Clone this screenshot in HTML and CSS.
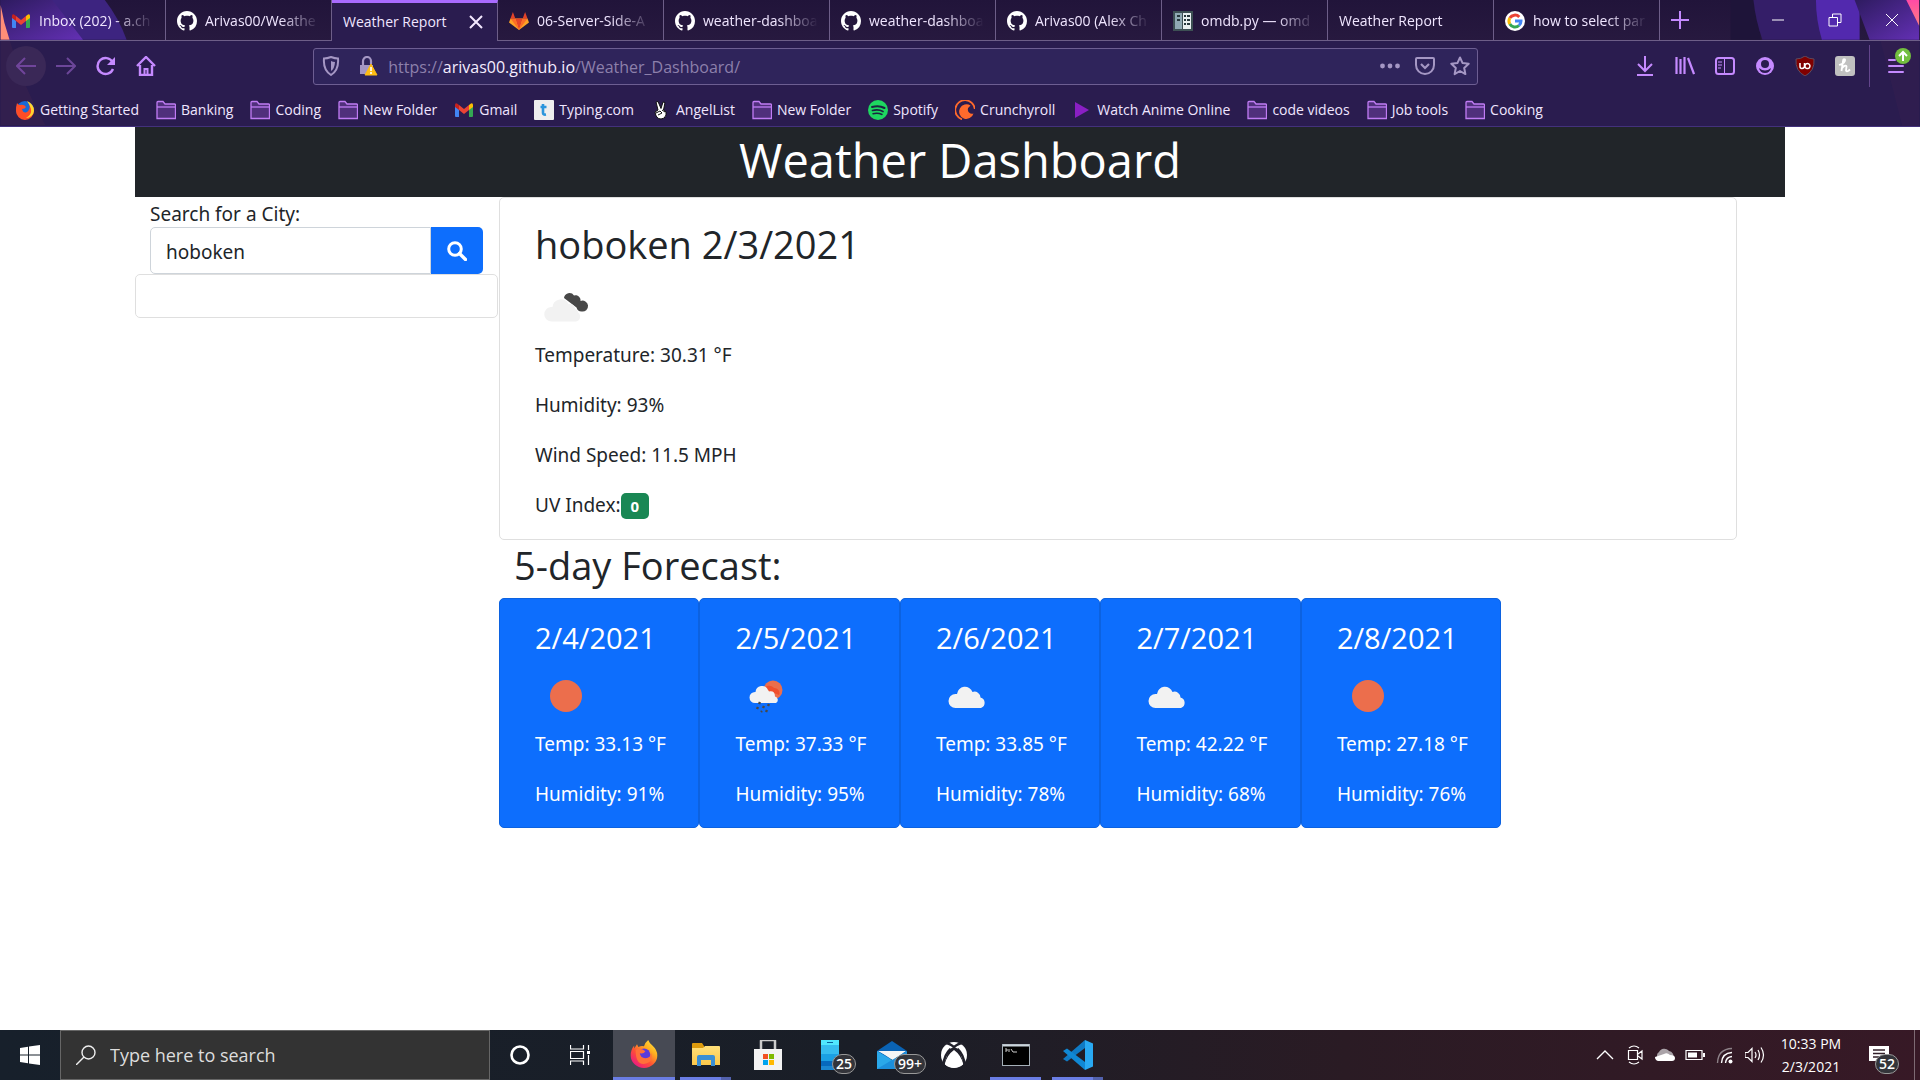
FILE: index.html
```html
<!DOCTYPE html>
<html lang="en">
<head>
<meta charset="utf-8">
<title>Weather Report</title>
<link rel="stylesheet" href="styles.css">
</head>
<body>
<svg class="defs" aria-hidden="true">
  <defs>
    <linearGradient id="g-folder" x1="0" y1="0" x2="0" y2="1"><stop offset="0" stop-color="#ffe07a"/><stop offset="1" stop-color="#fcc84a"/></linearGradient>
    <linearGradient id="g-fox" x1="1" y1="0" x2="0.2" y2="1"><stop offset="0" stop-color="#fff04a"/><stop offset=".35" stop-color="#ffb01f"/><stop offset=".65" stop-color="#ff4f35"/><stop offset="1" stop-color="#e8158a"/></linearGradient>
    <linearGradient id="g-wedge" x1="0" y1="0" x2="1" y2="1"><stop offset="0" stop-color="#2e1b60"/><stop offset="1" stop-color="#6330b4"/></linearGradient>
    <linearGradient id="g-pink" x1="0" y1="0" x2="0" y2="1"><stop offset="0" stop-color="#ff4aa6"/><stop offset="1" stop-color="#ff7d80"/></linearGradient>
  </defs>
  <symbol id="gmail" viewBox="0 0 20 20"><path d="M1 5v11q0 1 1 1h3V9z" fill="#4285f4"/><path d="M19 5v11q0 1-1 1h-3V9z" fill="#34a853"/><path d="M15 5l2-1.500q2-.7 2 1.500v2l-4 3z" fill="#fbbc04"/><path d="M5 5v5L1 7V5q0-2.200 2-1.500z" fill="#c5221f"/><path d="M5 5l5 4 5-4v5l-5 4-5-4z" fill="#ea4335"/></symbol>
  <symbol id="github" viewBox="0 0 16 16"><path fill="#fff" fill-rule="evenodd" d="M8 0C3.580 0 0 3.580 0 8c0 3.540 2.290 6.530 5.470 7.590.4.070.55-.17.55-.38 0-.19-.01-.82-.01-1.490-2.010.37-2.530-.49-2.690-.94-.09-.23-.48-.94-.82-1.130-.28-.15-.68-.52-.01-.53.63-.01 1.080.58 1.230.82.72 1.210 1.870.87 2.330.66.07-.52.28-.87.51-1.070-1.780-.2-3.640-.89-3.640-3.950 0-.87.31-1.590.82-2.150-.08-.2-.36-1.020.08-2.120 0 0 .67-.21 2.200.82.64-.18 1.320-.27 2-.27s1.360.09 2 .27c1.530-1.040 2.200-.82 2.200-.82.44 1.100.16 1.920.08 2.120.51.56.82 1.270.82 2.150 0 3.070-1.870 3.750-3.650 3.950.29.25.54.73.54 1.480 0 1.070-.01 1.930-.01 2.200 0 .21.15.46.55.38A8.010 8.010 0 0 0 16 8c0-4.420-3.580-8-8-8z"/></symbol>
  <symbol id="gitlab" viewBox="0 0 20 20"><path d="M10 19L0 11.500l1.500-4h17l1.500 4z" fill="#fca326"/><path d="M10 19L6.300 7.500h7.400z" fill="#e24329"/><path d="M10 19L1.500 7.500h4.800zM10 19l8.500-11.500h-4.800z" fill="#fc6d26"/><path d="M1.500 7.500L3.900 1l2.400 6.500zM18.500 7.500L16.100 1l-2.400 6.500z" fill="#e24329"/></symbol>
  <symbol id="repl" viewBox="0 0 20 20"><path fill="#3d5054" d="M0 0h20v20H0z"/><path fill="#8fa9b3" d="M2 2h7v16H2z"/><path fill="#e8f0f0" d="M10 2h8v16h-8z"/><path fill="#26383c" d="M4 4h3v2H4zM4 8h3v2H4zM11 4h2v2h-2zM14 4h3v2h-3zM11 8h2v2h-2zM14 8h3v2h-3zM11 12h2v2h-2zM14 12h3v2h-3z"/></symbol>
  <symbol id="google" viewBox="0 0 20 20"><circle cx="10" cy="10" r="10" fill="#fff"/><g fill="none" stroke-width="3"><path d="M14.300 6A6 6 0 0 0 4.800 7" stroke="#ea4335"/><path d="M4.800 7a6 6 0 0 0 0 6" stroke="#fbbc05"/><path d="M4.800 13a6 6 0 0 0 9.200 1.500" stroke="#34a853"/><path d="M14 14.500A6 6 0 0 0 16 10h-6" stroke="#4285f4"/></g></symbol>
  <symbol id="folder" viewBox="0 0 20 20"><path d="M1 18.500V2.500q0-1 1-1h5l2 2.500h9.500q1 0 1 1v13.500z" fill="#50307c" stroke="#c07cf4" stroke-width="1.300"/><path d="M1 7h18" stroke="#c07cf4" stroke-width="1.300"/></symbol>
  <symbol id="firefox" viewBox="0 0 20 20"><path d="M13 0q1 2.500 3 4 3.500 3.200 3.500 7A9.500 9 0 0 1 .5 11Q.5 7 3 4v2l2-3 1 2q2-1 4-.5Q11 1.500 13 0z" fill="url(#g-fox)"/><circle cx="10" cy="10.500" r="4.500" fill="#5a3bdc"/><path d="M4 7q4-2 7 1-1 2-4 1.500.5 3.500 4 3.500 4 0 4-4 2 7-4.500 8T4 7z" fill="#ff7139"/></symbol>
  <symbol id="firefoxold" viewBox="0 0 20 20"><circle cx="10" cy="10" r="9" fill="#1769d6"/><path d="M2 3q1 2 3 2 4-1 6 2-1 2-4 2 1 4 4 3.500Q16 11 14 3q5 3 5 8a9 9 0 0 1-18 0Q1 6 2 3z" fill="#ff4d27"/><path d="M12 1q7 3 7 10a8 8 0 0 1-8 7q6-3 5-9-1-4-4-8z" fill="#ffd52e"/></symbol>
  <symbol id="typing" viewBox="0 0 20 20"><rect width="20" height="20" rx="1" fill="#eee"/><path d="M9 4v9q0 2 3 1.500M6.500 7h6" fill="none" stroke="#2b95dc" stroke-width="2.600"/></symbol>
  <symbol id="peace" viewBox="0 0 20 20"><path d="M5 2l2-.5 3 7L12 2l2 .5-1.500 7.500 2.500 2v3q-1 4-5 4-5 0-6-7l3-2z" fill="#fff" stroke="#111"/><path d="M5 13l4-2 2 2-4 2M11 10l3 2" fill="none" stroke="#111"/></symbol>
  <symbol id="spotify" viewBox="0 0 20 20"><circle cx="10" cy="10" r="10" fill="#1ed760"/><g fill="none" stroke="#1b2440" stroke-linecap="round"><path d="M4 7q7-2 12.500 1" stroke-width="2"/><path d="M4.500 10.500q6-1.500 10.500 1" stroke-width="1.700"/><path d="M5 13.700q5-1.200 9 .8" stroke-width="1.400"/></g></symbol>
  <symbol id="crunchy" viewBox="0 0 20 20"><path d="M7 19.300A9.800 9.800 0 1 1 19.800 9" fill="none" stroke="#ff6a2c" stroke-width="1.800"/><path d="M15.500 5.500a7.300 7.300 0 1 0 3 8q-2.500 1-4.500-1-3-3.500 1.500-7z" fill="#ff6a2c"/></symbol>
  <symbol id="play" viewBox="0 0 20 20"><path d="M3 2l14 8-14 8z" fill="#8a1fc4"/></symbol>
  <symbol id="cloud" viewBox="0 0 62 62"><path d="M19.500 43a7 7 0 0 1 0-14h1.500a8 8 0 0 1 15.500-2 6 6 0 0 1 8 5.500 5.500 5.500 0 0 1 .5 10.500z" fill="#f2f2f2"/></symbol>
  <symbol id="sun" viewBox="0 0 62 62"><circle cx="31" cy="31" r="16" fill="#ec6e4c"/></symbol>
  <symbol id="broken" viewBox="0 0 62 62"><path d="M29 22a5.500 5.500 0 0 1 10-2.500 5 5 0 0 1 6.500 5.500 5.500 5.500 0 1 1 1 10.500q-4 0-5-4z" fill="#484848"/><path d="M17 45.500a7 7 0 0 1-1-14.500h1.500a8.500 8.500 0 0 1 16-3q6-.5 6.500 5 3 .5 3 3.500a5 5 0 0 1-2 9z" fill="#f2f2f2"/></symbol>
  <symbol id="rain" viewBox="0 0 62 62"><circle cx="38" cy="25" r="9.500" fill="#ec6e4c"/><path d="M29 24a6 6 0 0 1 10-1 5 5 0 0 1 5 7z" fill="#f0502e"/><path d="M20 38a5.500 5.500 0 0 1 0-11h.5a6.500 6.500 0 0 1 12.500-2q1 1 1 1.500 6-1 6 5a3.500 3.500 0 0 1 1 6.500z" fill="#f2f2f2"/><path d="M25 37l-1 2M23 42l-1 2M29 41l-1 2M34 39l-1 2M27 46l-1 1M32 45l-1 2" stroke="#484848" stroke-width="2.400"/></symbol>
</svg>

<header class="browser">
  <svg class="deco deco-left" viewBox="0 0 160 127" aria-hidden="true">
    <path d="M0 0h105q14 18 22 40H0z" fill="#3d2480"/><path d="M0 0h52q14 18 31 40H0z" fill="url(#g-wedge)"/><path d="M0 5q3 18 9 35H0z" fill="#ff8d78"/>
    <path d="M0 40h9q14 48 36 86H0z" fill="#38214f" opacity=".6"/>
  </svg>
  <svg class="deco deco-right" viewBox="0 0 220 127" aria-hidden="true">
    <path d="M30 0h30v40H30z" fill="#1e1439"/><path d="M53 0h70v40H62Q55 20 53 0z" fill="#341e68"/><path d="M116 0h44v40h-38q-6-20-6-40z" fill="#5229ae"/><path d="M155 0h65v40h-50z" fill="url(#g-wedge)"/><path d="M207 0h13v26z" fill="url(#g-pink)"/>
    <path d="M181 41h39v86h-17z" fill="#38214f" opacity=".4"/>
  </svg>
  <div class="tabs">
    <button class="tab"><svg class="fav"><use href="#gmail"/></svg><span class="tab-title">Inbox (202) - a.ch</span></button>
    <button class="tab"><svg class="fav"><use href="#github"/></svg><span class="tab-title">Arivas00/Weathe</span></button>
    <div class="tab active"><span class="tab-title">Weather Report</span><button class="icon-btn close" aria-label="Close tab"><svg viewBox="0 0 14 14"><path d="M1 1l12 12M13 1L1 13" fill="none" stroke="#f3e8ff" stroke-width="2"/></svg></button></div>
    <button class="tab"><svg class="fav"><use href="#gitlab"/></svg><span class="tab-title">06-Server-Side-A</span></button>
    <button class="tab"><svg class="fav"><use href="#github"/></svg><span class="tab-title">weather-dashboa</span></button>
    <button class="tab"><svg class="fav"><use href="#github"/></svg><span class="tab-title">weather-dashboa</span></button>
    <button class="tab"><svg class="fav"><use href="#github"/></svg><span class="tab-title">Arivas00 (Alex Ch</span></button>
    <button class="tab"><svg class="fav"><use href="#repl"/></svg><span class="tab-title">omdb.py — omd</span></button>
    <button class="tab"><span class="tab-title">Weather Report</span></button>
    <button class="tab"><svg class="fav"><use href="#google"/></svg><span class="tab-title">how to select par</span></button>
    <button class="icon-btn new-tab" aria-label="New tab"><svg viewBox="0 0 18 18"><path d="M9 0v18M0 9h18" stroke="#c58aff" stroke-width="2"/></svg></button>
    <div class="window-controls">
      <button class="icon-btn" aria-label="Minimize"><svg viewBox="0 0 14 14"><path d="M1 7h12" stroke="#fff"/></svg></button>
      <button class="icon-btn" aria-label="Restore"><svg viewBox="0 0 14 14"><path d="M1 4.500h8.500V13H1zM4.500 4V1H13v8.500H10" fill="none" stroke="#fff"/></svg></button>
      <button class="icon-btn" aria-label="Close"><svg viewBox="0 0 14 14"><path d="M1 1l12 12M13 1L1 13" stroke="#fff"/></svg></button>
    </div>
  </div>

  <div class="toolbar">
    <button class="icon-btn tool back" aria-label="Back"><svg viewBox="0 0 20 20"><path d="M20 10H1M9 2L1 10l8 8" fill="none" stroke="#70459b" stroke-width="2"/></svg></button>
    <button class="icon-btn tool" aria-label="Forward"><svg viewBox="0 0 20 20"><path d="M0 10h19M11 2l8 8-8 8" fill="none" stroke="#6c4699" stroke-width="2"/></svg></button>
    <button class="icon-btn tool" aria-label="Reload"><svg viewBox="0 0 20 20"><path d="M17 13a8 8 0 1 1-.5-7" fill="none" stroke="#c58aff" stroke-width="2.400"/><path d="M19 1v8h-8z" fill="#c58aff"/></svg></button>
    <button class="icon-btn tool" aria-label="Home"><svg viewBox="0 0 20 20"><path d="M1 10l9-9 9 9M4 9v10h12V9" fill="none" stroke="#c58aff" stroke-width="2.400"/><path d="M8.500 19v-6h3v6" fill="none" stroke="#c58aff" stroke-width="2"/></svg></button>
    <div class="spacer"></div>
    <div class="urlbar">
      <svg class="url-icon" viewBox="0 0 20 20"><path d="M10 1q4 1.500 7 1.500Q18 14 10 19 2 14 3 2.500 6 2.500 10 1z" fill="none" stroke="#a597c4" stroke-width="2"/><path d="M10 5q2 1 4 1-.5 7-4 9z" fill="#a597c4"/></svg>
      <svg class="url-icon lock" viewBox="0 0 20 20"><path d="M5 9V5a4 4 0 0 1 8 0v3" fill="none" stroke="#a597c4" stroke-width="2.200"/><path d="M2 9h13v9H2z" fill="#a597c4"/><path d="M13 8l6 11H7z" fill="#ffbd14" stroke="#ffbd14" stroke-linejoin="round"/><path d="M13 11v4M13 16v2" stroke="#fff" stroke-width="1.600"/></svg>
      <div class="url" role="textbox" aria-label="Address">https://<span class="host">arivas00.github.io</span>/Weather_Dashboard/</div>
      <svg class="url-icon" viewBox="0 0 20 20"><g fill="#a597c4"><circle cx="2.500" cy="10" r="2.400"/><circle cx="10" cy="10" r="2.400"/><circle cx="17.500" cy="10" r="2.400"/></g></svg>
      <svg class="url-icon" viewBox="0 0 20 20"><path d="M2 2h16q1 0 1 1v6a9 9 0 0 1-18 0V3q0-1 1-1z" fill="none" stroke="#a597c4" stroke-width="2"/><path d="M6 8l4 4 4-4" fill="none" stroke="#a597c4" stroke-width="2.200"/></svg>
      <svg class="url-icon" viewBox="0 0 20 20"><path d="M10 1.500l2.600 5.600 6.100.7-4.500 4.200 1.200 6.100L10 15l-5.400 3.100L5.800 12 1.300 7.800l6.100-.7z" fill="none" stroke="#a597c4" stroke-width="2" stroke-linejoin="round"/></svg>
    </div>
    <div class="spacer"></div>
    <button class="icon-btn tool" aria-label="Downloads"><svg viewBox="0 0 20 20"><path d="M10 0v14M3 8l7 7 7-7M2 19h16" fill="none" stroke="#c58aff" stroke-width="2"/></svg></button>
    <button class="icon-btn tool" aria-label="Library"><svg viewBox="0 0 20 20"><path d="M1.500 1v17M5.500 3v15M9.500 1v17M13 2l6 16" fill="none" stroke="#c58aff" stroke-width="2.200"/></svg></button>
    <button class="icon-btn tool" aria-label="Sidebars"><svg viewBox="0 0 20 20"><rect x="1" y="2" width="18" height="16" rx="2.500" fill="none" stroke="#c58aff" stroke-width="2"/><path d="M9.500 2v16M3 6h4M3 9h4M3 12h3" stroke="#c58aff"/></svg></button>
    <button class="icon-btn tool" aria-label="Account"><svg viewBox="0 0 20 20"><circle cx="10" cy="10" r="9" fill="#c58aff"/><circle cx="10" cy="8" r="4" fill="#2a1c4f"/><path d="M4 12q6 5 12 0-1 5-6 5t-6-5z" fill="#2a1c4f"/></svg></button>
    <button class="icon-btn tool" aria-label="uBlock Origin"><svg viewBox="0 0 20 20"><path d="M10 0q4 3 9 3 1 12-9 17Q0 15 1 3q5 0 9-3z" fill="#800000" stroke="#5e4a5e"/><path d="M5 7v3.500q0 2 2 2t2.500-2V7M12.500 7.500a2.500 2.500 0 1 1-.1 0z" fill="none" stroke="#fff" stroke-width="1.500"/></svg></button>
    <button class="icon-btn tool" aria-label="Honey"><svg viewBox="0 0 20 20"><rect width="20" height="20" rx="3" fill="#c0c0c0"/><path d="M4 9q7-2 6-5.500-2-1-2 2L6.500 15M7 12q4-4 4.500-1.500l-.5 4q1 2 4-1" fill="none" stroke="#fff" stroke-width="1.800"/></svg></button>
    <div class="divider"></div>
    <button class="icon-btn tool menu" aria-label="Menu"><svg viewBox="0 0 16 20"><path d="M1 4h6M1 10h14M1 16h14" stroke="#c58aff" stroke-width="2" stroke-linecap="round"/></svg><span class="update"><svg viewBox="0 0 16 16"><circle cx="8" cy="8" r="8" fill="#73bf3f"/><path d="M8 13V4M4 8l4-4 4 4" fill="none" stroke="#fff" stroke-width="2"/></svg></span></button>
  </div>

  <nav class="bookmarks">
    <a href="#"><svg><use href="#firefoxold"/></svg>Getting Started</a>
    <a href="#"><svg><use href="#folder"/></svg>Banking</a>
    <a href="#"><svg><use href="#folder"/></svg>Coding</a>
    <a href="#"><svg><use href="#folder"/></svg>New Folder</a>
    <a href="#"><svg><use href="#gmail"/></svg>Gmail</a>
    <a href="#"><svg><use href="#typing"/></svg>Typing.com</a>
    <a href="#"><svg><use href="#peace"/></svg>AngelList</a>
    <a href="#"><svg><use href="#folder"/></svg>New Folder</a>
    <a href="#"><svg><use href="#spotify"/></svg>Spotify</a>
    <a href="#"><svg><use href="#crunchy"/></svg>Crunchyroll</a>
    <a href="#"><svg><use href="#play"/></svg>Watch Anime Online</a>
    <a href="#"><svg><use href="#folder"/></svg>code videos</a>
    <a href="#"><svg><use href="#folder"/></svg>Job tools</a>
    <a href="#"><svg><use href="#folder"/></svg>Cooking</a>
  </nav>
</header>

<main class="container">
  <h1 class="banner">Weather Dashboard</h1>
  <div class="row">
    <aside>
      <form class="search">
        <label for="city">Search for a City:</label>
        <div class="input-group">
          <input id="city" type="text" value="hoboken">
          <button type="button" aria-label="Search"><svg viewBox="0 0 20 20"><circle cx="8" cy="8" r="6.300" fill="none" stroke="#fff" stroke-width="3"/><path d="M12.500 12.500l6 6" stroke="#fff" stroke-width="3.400" stroke-linecap="round"/></svg></button>
        </div>
      </form>
      <div class="history"></div>
    </aside>
    <div class="results">
      <section class="card current">
        <h2>hoboken 2/3/2021</h2>
        <svg class="weather"><use href="#broken"/></svg>
        <p>Temperature: 30.31 °F</p>
        <p>Humidity: 93%</p>
        <p>Wind Speed: 11.5 MPH</p>
        <p>UV Index:<span class="badge">0</span></p>
      </section>
      <h2 class="forecast-title">5-day Forecast:</h2>
      <div class="forecast">
        <section class="card day"><h3>2/4/2021</h3><svg class="weather"><use href="#sun"/></svg><p>Temp: 33.13 °F</p><p>Humidity: 91%</p></section>
        <section class="card day"><h3>2/5/2021</h3><svg class="weather"><use href="#rain"/></svg><p>Temp: 37.33 °F</p><p>Humidity: 95%</p></section>
        <section class="card day"><h3>2/6/2021</h3><svg class="weather"><use href="#cloud"/></svg><p>Temp: 33.85 °F</p><p>Humidity: 78%</p></section>
        <section class="card day"><h3>2/7/2021</h3><svg class="weather"><use href="#cloud"/></svg><p>Temp: 42.22 °F</p><p>Humidity: 68%</p></section>
        <section class="card day"><h3>2/8/2021</h3><svg class="weather"><use href="#sun"/></svg><p>Temp: 27.18 °F</p><p>Humidity: 76%</p></section>
      </div>
    </div>
  </div>
</main>

<footer class="taskbar">
  <button class="start" aria-label="Start"><svg viewBox="0 0 20 20"><path d="M0 3l8-1.200V9.500H0zM9 1.600L20 0v9.500H9zM0 10.500h8v7.700L0 17zM9 10.500h11V20L9 18.400z" fill="#fff"/></svg></button>
  <label class="task-search"><svg viewBox="0 0 20 20"><circle cx="12.500" cy="7.500" r="6.500" fill="none" stroke="#eee" stroke-width="1.400"/><path d="M8 12l-8 8" stroke="#eee" stroke-width="1.400"/></svg><input type="text" placeholder="Type here to search" aria-label="Type here to search"></label>
  <button class="task system" aria-label="Cortana"><svg class="s20" viewBox="0 0 20 20"><circle cx="10" cy="10" r="8.500" fill="none" stroke="#fff" stroke-width="2.600"/></svg></button>
  <button class="task system" aria-label="Task View"><svg class="s20" viewBox="0 0 20 20"><path d="M.5 0v4h13V0M.5 20v-4h13v4M.5 6.500h13v7H.5zM18.500 0v5M18.500 10v10" fill="none" stroke="#fff" stroke-width="1.200"/><path d="M17 6h3v3h-3z" fill="#fff"/></svg></button>
  <div class="apps">
  <button class="task focus" aria-label="Firefox"><svg viewBox="0 0 30 30"><use href="#firefox" width="28" height="28" x="1" y="0"/></svg></button>
  <button class="task open multi" aria-label="File Explorer"><svg viewBox="0 0 30 30"><path d="M1 4q0-1 1-1h9l2 3v4H1z" fill="#dc9a0c"/><path d="M1 8h11l2-2h14q1 0 1 1v18H1z" fill="url(#g-folder)"/><path d="M6 26V17q0-2 2-2h14q2 0 2 2v9h-4v-6H10v6z" fill="#3b8fd4"/></svg></button>
  <button class="task" aria-label="Store"><svg viewBox="0 0 30 30"><path d="M8 10V1q0-1 1-1h12q1 0 1 1v9" fill="none" stroke="#ccc" stroke-width="2.500"/><path d="M1 9h28v21H1z" fill="#f3f3f3"/><path d="M10 14h5v5h-5z" fill="#f25022"/><path d="M16 14h5v5h-5z" fill="#7fba00"/><path d="M10 20h5v5h-5z" fill="#00a4ef"/><path d="M16 20h5v5h-5z" fill="#ffb900"/></svg></button>
  <button class="task" aria-label="Your Phone"><svg viewBox="0 0 30 30"><path d="M6 0h18v30H6z" fill="#1a86d0"/><path d="M6 0h18v5H6z" fill="#50e6ff"/><path d="M6 5h18v9H6z" fill="#35bcf0"/><path d="M6 14h18v7H6z" fill="#1aa0e4"/><path d="M6 21h18v5H6z" fill="#0669bd"/><path d="M12 2.500h6" stroke="#0a5f9c"/></svg><span class="count">25</span></button>
  <button class="task" aria-label="Mail"><svg viewBox="0 0 30 30"><path d="M0 11L15 1l15 10v8H0z" fill="#0a63b4"/><path d="M2 11h26l-11 10z" fill="#f5f5f5"/><path d="M0 11l30 18H0z" fill="#2aa8ea"/><path d="M30 11v18H0z" fill="#1c8fdc"/><path d="M1 11h28l-13 8z" fill="#f5f5f5"/></svg><span class="count">99+</span></button>
  <button class="task" aria-label="Xbox"><svg viewBox="0 0 30 30"><circle cx="15" cy="15" r="13" fill="#fff"/><path d="M6 3q4 0 9 4 5-4 9-4M11.500 9Q5 15 4.500 25M18.500 9Q25 15 25.500 25" fill="none" stroke="#20202a" stroke-width="2.400"/><path d="M15 10q-7 5-9.500 14.500L4 26 10.500 9 15 7l4.500 2L26 26l-1.500-1.500Q22 15 15 10z" fill="#20202a"/><path d="M15 11Q8 16 6.500 24.500a13 13 0 0 0 17 0Q22 16 15 11z" fill="#fff"/></svg></button>
  <button class="task open" aria-label="Command Prompt"><svg viewBox="0 0 30 30"><rect x="1.500" y="4.500" width="27" height="21" fill="#000" stroke="#a5b0b8"/><path d="M2 5.500h26" stroke="#cbd5dc" stroke-width="2"/><path d="M4 9h2v2H4M8 9v3M10 9l2 3h4" fill="none" stroke="#ccc"/></svg></button>
  <button class="task open multi" aria-label="Visual Studio Code"><svg viewBox="0 0 30 30"><path d="M22 8L4 21.500 0 19 22 0z" fill="#0f7ac4"/><path d="M22 22L4 8.500 0 11l22 19z" fill="#1088d4"/><path d="M22 0l8 3.500v23L22 30z" fill="#29a9f2"/></svg></button>
  </div>
  <div class="tray">
    <svg class="s20" viewBox="0 0 20 20"><path d="M2 14l8-8 8 8" fill="none" stroke="#fff" stroke-width="1.300"/></svg>
    <svg class="s20" viewBox="0 0 20 20"><path d="M3.500 5.500h9v9h-9zM13 9l4-3v8l-4-3M4 3q5-4 10 0M4 17q5 4 10 0" fill="none" stroke="#fff" stroke-width="1.200"/></svg>
    <svg class="s20" viewBox="0 0 20 20"><path d="M4 14a4 4 0 0 1 0-7 6 6 0 0 1 10-1 5 5 0 0 1 4 7z" fill="#aaa3a8"/><path d="M3 16q-3-1-3-4l9-3q3-2 6 1 5 0 5 3t-3 3z" fill="#fff"/></svg>
    <svg class="s20" viewBox="0 0 20 20"><path d="M1 5.500h16v9H1z" fill="none" stroke="#fff" stroke-width="1.200"/><path d="M3 7.500h9v5H3zM18 8h2v4h-2z" fill="#fff"/></svg>
    <svg class="s20" viewBox="0 0 20 20"><path d="M2.500 18Q3 4 17 3.500" fill="none" stroke="#8d8288" stroke-width="1.400"/><path d="M6.500 18Q7 8 17 7.500M10.500 18q.5-6 6.500-6.500" fill="none" stroke="#fff" stroke-width="1.400"/><circle cx="15.500" cy="16.500" r="2" fill="#fff"/></svg>
    <svg class="s20" viewBox="0 0 20 20"><path d="M0 7.500h3l4-4v13l-4-4H0zM10 7q2 3 0 6M13 5q3 5 0 10M16 2.500q5 7.500 0 15" fill="none" stroke="#fff" stroke-width="1.200"/></svg>
  </div>
  <time class="clock"><span>10:33 PM</span><span>2/3/2021</span></time>
  <button class="notify" aria-label="Notifications"><svg class="s20" viewBox="0 0 20 20"><path d="M0 1h20v15h-9l-4 4v-4H0z" fill="#fff"/><path d="M4 5h12M4 8.500h12M4 12h7" stroke="#33202a" stroke-width="1.300"/></svg><span class="count">52</span></button>
  <div class="show-desktop"></div>
</footer>
</body>
</html>
```
FILE: styles.css
```css
* { box-sizing: border-box; }
body {
  margin: 0;
  min-height: 100vh;
  display: flex;
  flex-direction: column;
  background: #fff;
  color: #212529;
  font-family: "Open Sans", "Noto Sans", sans-serif;
  font-size: 18px;
  line-height: 30px;
}
button { font: inherit; border: 0; padding: 0; background: none; color: inherit; }
h1, h2, h3, p { margin: 0; font-weight: 400; }
svg { display: block; flex: none; }
.defs { position: absolute; width: 0; height: 0; }

/* Browser window */
.browser {
  position: relative;
  background: #2a1c4f;
  border-bottom: 1px solid #43317c;
  color: #f0e6ff;
  font-size: 14px;
  line-height: 20px;
}
.deco { position: absolute; z-index: 1; top: 0; height: 126px; pointer-events: none; }
.deco-left { left: 0; width: 160px; }
.deco-right { right: 0; width: 220px; }
.tabs {
  position: relative;
  display: flex;
  height: 41px;
  background: linear-gradient(#21143a, #27193f);
}
.tab {
  flex: 0 1 166px;
  min-width: 0;
  display: flex;
  align-items: center;
  gap: 8px;
  padding: 2px 11px 0;
  border-right: 1px solid #6d5e88;
  border-bottom: 1px solid #6d5e88;
  text-align: left;
}
.tab, .toolbar, .bookmarks, .window-controls { position: relative; z-index: 2; }
.tab-title {
  flex: 1;
  overflow: hidden;
  white-space: nowrap;
  -webkit-mask-image: linear-gradient(to left, transparent, #000 40px);
  mask-image: linear-gradient(to left, transparent, #000 40px);
}
.tab.active {
  background: #2a1c4f;
  border-top: 3px solid #a96bff;
  border-bottom: 0;
  padding: 0 11px;
}
.tab.active .tab-title { mask-image: none; -webkit-mask-image: none; }
.fav { width: 20px; height: 20px; }
.icon-btn { display: flex; align-items: center; justify-content: center; }
.close { width: 20px; }
.close svg { width: 14px; height: 14px; }
.new-tab { width: 40px; border-bottom: 1px solid #6d5e88; }
.new-tab svg { width: 18px; height: 18px; }
.window-controls { flex: 1; display: flex; justify-content: flex-end; border-bottom: 1px solid #6d5e88; }
.window-controls .icon-btn { width: 57px; }
.window-controls svg { width: 14px; height: 14px; }
.toolbar { display: flex; align-items: center; height: 50px; padding: 0 4px 0 6px; }
.tool { width: 40px; height: 40px; }
.tool svg { width: 20px; height: 20px; }
.back { border-radius: 50%; background: #3a2857; }
.spacer { flex: 5; }
.urlbar {
  flex: 39;
  min-width: 0;
  display: flex;
  align-items: center;
  gap: 15px;
  height: 37px;
  padding: 0 7px;
  background: #2f245b;
  border: 1px solid #6d5e92;
  border-radius: 3px;
}
.url-icon { width: 20px; height: 20px; }
.url {
  flex: 1;
  min-width: 0;
  overflow: hidden;
  padding-top: 2px;
  white-space: nowrap;
  font-size: 16px;
  line-height: 22px;
  color: #8d80ab;
}
.urlbar .lock { margin: 0 -5px 0 2px; }
.host { color: #f5edff; }
.divider { width: 1px; height: 42px; margin: 0 6px 0 4px; background: #63458c; }
.menu { position: relative; }
.menu svg { width: 16px; }
.update { position: absolute; top: 2px; right: 5px; }
.update svg { height: 16px; }
.bookmarks { display: flex; align-items: center; gap: 17px; height: 35px; padding: 2px 15px 0; }
.bookmarks a { display: flex; align-items: center; gap: 5px; color: inherit; text-decoration: none; white-space: nowrap; }
.bookmarks svg { width: 20px; height: 20px; }

/* Weather page */
.container { flex: 1; width: 100%; max-width: 1650px; margin: 0 auto; font-family: "Noto Sans", "Open Sans", sans-serif; font-size: 19px; }
.banner, .container h2, .container h3 { font-family: "Open Sans", "Noto Sans", sans-serif; }
.banner { height: 70px; background: #212529; color: #fff; text-align: center; font-size: 47px; line-height: 66px; }
.row { display: grid; grid-template-columns: 22% 75%; align-items: start; column-gap: 1px; }
.search { padding: 2px 15px 0; }
.search label { display: block; height: 28px; }
.input-group { display: flex; height: 47px; }
.input-group input {
  flex: 1;
  min-width: 0;
  padding: 2px 15px 0;
  border: 1px solid #ced4da;
  border-radius: 5px 0 0 5px;
  color: inherit;
  font: inherit;
}
.input-group button { width: 52px; display: flex; align-items: center; justify-content: center; background: #0d6efd; border-radius: 0 5px 5px 0; }
.input-group svg { width: 20px; height: 20px; }
.history { height: 44px; border: 1px solid #dfdfdf; border-radius: 5px; }
.card { border: 1px solid #dfdfdf; border-radius: 5px; padding: 20px 35px; }
.card p { margin-bottom: 20px; }
.card p:last-child { margin-bottom: 0; }
.current { height: 343px; padding-top: 22px; }
.container .current h2, .container .forecast-title { font-size: 38px; line-height: 48px; }
.weather { width: 62px; height: 62px; }
.current .weather { margin: 8px 0 2px; }
.badge { display: inline-block; padding: 0 10px; border-radius: 5px; background: #198754; color: #fff; font-size: 15px; font-weight: 700; line-height: 26px; }
.forecast-title { padding: 1px 15px 9px; }
.forecast { display: grid; grid-template-columns: repeat(5, minmax(0, 1fr)); width: 81%; }
.day { height: 230px; padding-right: 20px; background: #0d6efd; border-color: #0c62e0; color: #fff; }
.day h3 { font-size: 29px; line-height: 38px; }
.day .weather { margin: 8px 0 2px; }
.day p { white-space: nowrap; }

/* Desktop taskbar */
.taskbar {
  display: flex;
  height: 50px;
  background: linear-gradient(90deg, #17202b, #1a1e27 45%, #2a1b24 70%, #371926);
  color: #fff;
}
.start { width: 60px; display: flex; align-items: center; justify-content: center; }
.start svg { width: 20px; height: 20px; }
.task-search { width: 430px; display: flex; align-items: center; gap: 14px; padding: 0 15px; background: #333; border: 1px solid #666; }
.task-search svg { width: 20px; height: 20px; }
.task-search input { flex: 1; min-width: 0; border: 0; padding: 0; background: none; color: #fff; font: inherit; }
.task-search input::placeholder { color: #ddd; opacity: 1; }
.task { position: relative; width: 62px; display: flex; align-items: center; justify-content: center; }
.task.system { width: 60px; }
.apps { display: flex; margin-left: 3px; }
.task svg { width: 30px; height: 30px; }
.task .s20, .s20 { width: 20px; height: 20px; }
.focus { background: #474a54; border-bottom: 3px solid #6a7de4; padding-top: 3px; }
.open::after { content: ""; position: absolute; bottom: 0; left: 5px; right: 6px; height: 3px; background: #6a7de4; }
.multi::after { background: linear-gradient(90deg, #6a7de4 80%, #5261ac 80%); }
.count {
  position: absolute;
  top: 24px;
  left: 33px;
  padding: 0 3px;
  border: 1px solid #999;
  border-radius: 10px;
  background: #33343a;
  color: #fff;
  font-size: 14px;
  font-weight: 600;
  line-height: 18px;
}
.tray { margin-left: auto; display: flex; align-items: center; gap: 10px; }
.clock { display: flex; flex-direction: column; align-items: center; justify-content: center; width: 92px; font-size: 14px; line-height: 23px; }
.notify { position: relative; width: 57px; display: flex; align-items: center; padding-left: 12px; }
.notify .count { left: 18px; }
.show-desktop { width: 6px; border-left: 1px solid #7d6a73; }
```
